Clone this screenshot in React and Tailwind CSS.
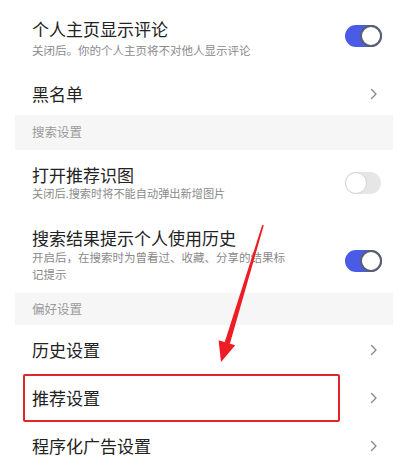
import React from 'react';

const font = { fontFamily: '"Noto Sans CJK SC", "Noto Sans", sans-serif' };

function Toggle({ on }) {
  if (on) {
    return (
      <div className="relative h-[22px] w-[37px] shrink-0 rounded-full bg-[#4a5be6]">
        <div className="absolute right-0 top-0 h-[22px] w-[22px] rounded-full border-2 border-[#5a5f6e] bg-white" />
      </div>
    );
  }
  return (
    <div className="relative h-[22px] w-[36px] shrink-0 rounded-full bg-[#e6e6e6]">
      <div className="absolute left-0 top-0 h-[22px] w-[22px] rounded-full border border-[#d4d4d4] bg-white" />
    </div>
  );
}

function Chevron() {
  return (
    <svg width="8" height="12" viewBox="0 0 8 12" className="shrink-0">
      <path d="M1.5 1.5 L6 6 L1.5 10.5" fill="none" stroke="#8a8a8a" strokeWidth="1.4" strokeLinecap="round" strokeLinejoin="round" />
    </svg>
  );
}

function Header({ children, className }) {
  return (
    <div className={`flex items-center bg-[#f6f6f6] pl-[17px] text-[12.5px] text-[#9a9a9a] ${className}`}>
      {children}
    </div>
  );
}

function LinkRow({ title, className }) {
  return (
    <div className={`flex h-[48px] items-center justify-between pl-[17px] pr-[15px] ${className || ''}`}>
      <span className="text-[17px] leading-[20px] text-[#222]">{title}</span>
      <Chevron />
    </div>
  );
}

export default function App() {
  return (
    <div className="relative h-[468px] w-[400px] overflow-hidden bg-white" style={font}>
      <div className="ml-[15px] mr-[7px]">
        <div className="flex h-[72px] items-start justify-between pl-[17px] pr-[11px] pt-[19px]">
          <div>
            <div className="text-[17px] leading-[20px] text-[#222]">个人主页显示评论</div>
            <div className="mt-[3px] text-[11.5px] leading-[16px] text-[#8a8a8a]">关闭后。你的个人主页将不对他人显示评论</div>
          </div>
          <div className="mt-[6px]">
            <Toggle on />
          </div>
        </div>
        <div className="flex h-[43px] items-center justify-between pl-[17px] pr-[15px]">
          <span className="text-[17px] leading-[20px] text-[#222]">黑名单</span>
          <Chevron />
        </div>
        <Header className="h-[35px]">搜索设置</Header>
        <div className="flex h-[62px] items-start justify-between pl-[17px] pr-[12px] pt-[15px]">
          <div>
            <div className="text-[17px] leading-[20px] text-[#222]">打开推荐识图</div>
            <div className="text-[11.2px] leading-[16px] text-[#8a8a8a]">关闭后.搜索时将不能自动弹出新增图片</div>
          </div>
          <div className="mt-[7px]">
            <Toggle />
          </div>
        </div>
        <div className="flex h-[81px] items-start justify-between pl-[17px] pr-[11px] pt-[16px]">
          <div>
            <div className="text-[17px] leading-[20px] text-[#222]">搜索结果提示个人使用历史</div>
            <div className="mt-[1px] w-[258px] text-[11.5px] leading-[17px] text-[#8a8a8a]">开启后，在搜索时为曾看过、收藏、分享的结果标记提示</div>
          </div>
          <div className="mt-[22px]">
            <Toggle on />
          </div>
        </div>
        <Header className="h-[32px]">偏好设置</Header>
        <LinkRow title="历史设置" className="h-[49px]" />
        <div className="relative">
          <div className="pointer-events-none absolute bottom-0 left-[8px] top-0 w-[317px] rounded-[2px] border-2 border-[#e0262d]" />
          <LinkRow title="推荐设置" />
        </div>
        <LinkRow title="程序化广告设置" />
      </div>
      <svg className="pointer-events-none absolute left-0 top-0" width="400" height="468" viewBox="0 0 400 468">
        <polygon points="262.2,225 263.8,225.3 229.8,344 224.6,342.4" fill="#ee1c24" />
        <polygon points="221,362 218.6,340.2 235.2,345.3" fill="#ee1c24" />
      </svg>
    </div>
  );
}
